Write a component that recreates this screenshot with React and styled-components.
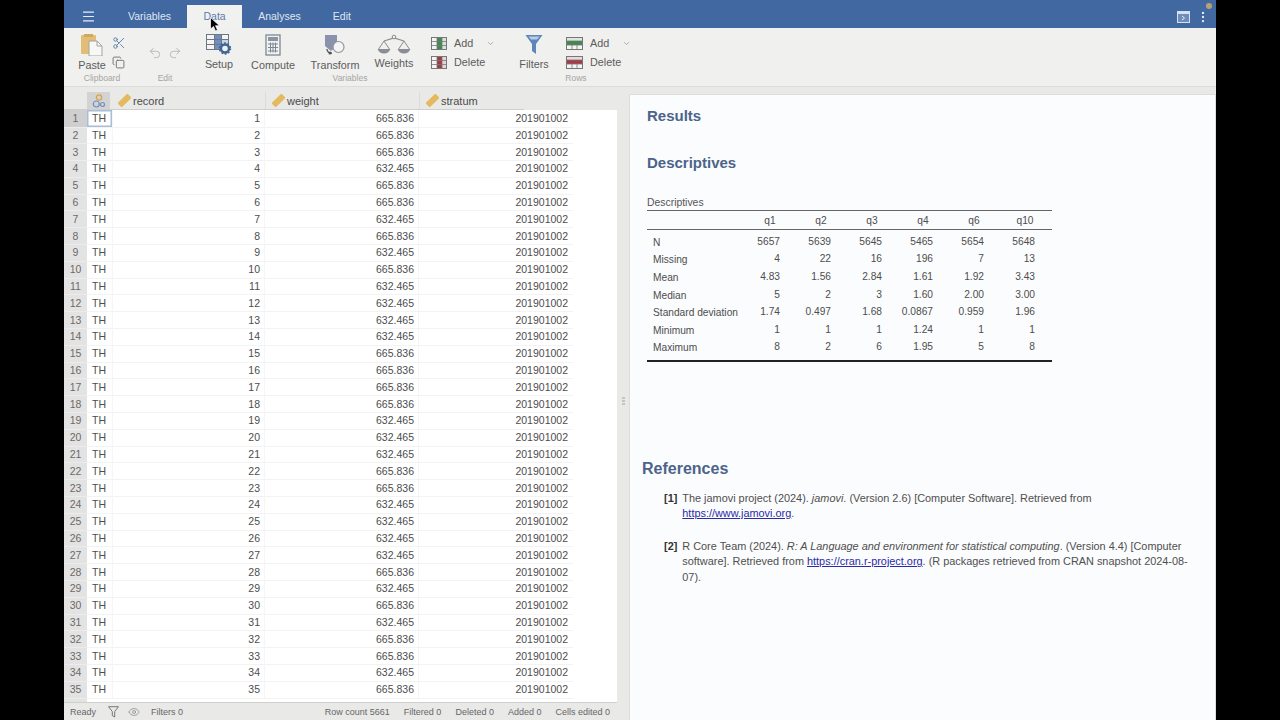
import React from 'react'
import styled, { createGlobalStyle } from 'styled-components'
import { Menu, Scissors, Copy, Undo2, Redo2, ChevronDown, EllipsisVertical, Eye } from 'lucide-react'

const GlobalStyle = createGlobalStyle`
  html, body {
    margin: 0;
    height: 100%;
    background: #000;
    font-family: "Liberation Sans", Arial, sans-serif;
    overflow: hidden;
  }
  #root { height: 100%; }
  * { box-sizing: border-box; }
`

const Page = styled.div`
  display: flex;
  justify-content: center;
  height: 720px;
`

const Window = styled.div`
  position: relative;
  width: 1152px;
  height: 720px;
  display: flex;
  flex-direction: column;
  background: #e9e9e8;
`

const TopBar = styled.div`
  height: 28px;
  flex: none;
  display: flex;
  align-items: flex-end;
  background: #4268a2;
  color: #e6edf7;
`

const MenuButton = styled.div`
  width: 48px;
  height: 23px;
  display: flex;
  align-items: center;
  justify-content: center;
  color: #e6edf7;
`

const Tab = styled.div`
  height: 23px;
  padding: 0 ${p => (p.$active ? '16.5px' : '16px')};
  font-size: 10.5px;
  line-height: 23px;
  background: ${p => (p.$active ? '#f1f1ef' : 'transparent')};
  color: ${p => (p.$active ? '#5b7cab' : '#dfe7f3')};
`

const TopRight = styled.div`
  margin-left: auto;
  height: 28px;
  display: flex;
  align-items: center;
  gap: 6px;
  padding: 6px 6px 0 0;
`

const RecordDot = styled.div`
  position: absolute;
  left: 1142px;
  top: 3px;
  width: 6px;
  height: 6px;
  border-radius: 50%;
  background: #b9a078;
`

const Cursor = styled.svg`
  position: absolute;
  left: 146px;
  top: 17px;
  width: 10px;
  height: 15px;
`

const Ribbon = styled.div`
  height: 59px;
  flex: none;
  display: flex;
  padding-left: 8px;
  background: #f0f0ee;
  border-bottom: 1px solid #dcdcdb;
`

const Group = styled.div`
  display: flex;
  flex-direction: column;
  margin-right: ${p => p.$gap || 0}px;
`

const GroupItems = styled.div`
  display: flex;
  height: 38px;
  margin-top: 6px;
  padding: ${p => p.$padding || 0};
  align-items: ${p => p.$align || 'stretch'};
  gap: ${p => p.$spacing || 0}px;
`

const GroupLabel = styled.div`
  height: 12px;
  font-size: 8.5px;
  line-height: 12px;
  text-align: center;
  color: #a5a5a3;
`

const BigButton = styled.div`
  width: ${p => p.$width}px;
  display: flex;
  flex-direction: column;
  align-items: center;
  color: #5c5c5c;
  font-size: 10.8px;
  line-height: 18px;
  white-space: nowrap;
`

const BigIcon = styled.div`
  height: 22px;
  display: flex;
  align-items: center;
  justify-content: center;
`

const SmallColumn = styled.div`
  width: ${p => p.$width}px;
  padding-left: ${p => p.$padding || 0}px;
  display: flex;
  flex-direction: column;
  gap: 1px;
`

const SmallRow = styled.div`
  height: 18px;
  display: flex;
  align-items: center;
  color: #5c5c5c;
`

const SmallText = styled.span`
  width: 32px;
  margin-left: 7px;
  font-size: 10.8px;
  white-space: nowrap;
`

const Main = styled.div`
  flex: 1;
  min-height: 0;
  display: flex;
`

const DataSide = styled.div`
  width: 553px;
  flex: none;
  display: flex;
  flex-direction: column;
  padding-top: 5px;
`

const SheetHeader = styled.div`
  height: 18px;
  flex: none;
  display: grid;
  grid-template-columns: 23px 23px 155px 154px 105px;
  border-bottom: 1px solid #cfcfcf;
  width: 460px;
`

const HeaderCell = styled.div`
  display: flex;
  align-items: center;
  gap: 2px;
  padding-left: ${p => p.$pad || 0}px;
  justify-content: ${p => (p.$type ? 'center' : 'flex-start')};
  background: ${p => (p.$type ? '#d3d3d3' : 'transparent')};
  border-left: ${p => (p.$line ? '1px solid #dcdcdc' : 'none')};
  font-size: 11px;
  color: #4a4a4a;
`

const SheetBody = styled.div`
  flex: 1;
  min-height: 0;
  overflow: hidden;
  background: linear-gradient(to right, #e3e3e3 23px, #fff 23px);
  border-bottom: 1px solid #cfcfcf;
`

const Row = styled.div`
  height: 16.8px;
  width: 509px;
  display: grid;
  grid-template-columns: 23px 26px 152px 154px 154px;
  font-size: 10.5px;
  line-height: 16.5px;
  color: #4d4d4d;
`

const RowNumber = styled.div`
  text-align: center;
  color: #6a6a6a;
  background: ${p => (p.$active ? '#cfcfcf' : 'transparent')};
  border-bottom: 1px solid #ececec;
`

const Cell = styled.div`
  padding: 0 ${p => (p.$noLine ? 5 : 4)}px 0 5px;
  text-align: ${p => (p.$left ? 'left' : 'right')};
  border-bottom: 1px solid #f3f3f3;
  border-right: ${p => (p.$noLine ? 'none' : '1px solid #f5f5f5')};
  box-shadow: ${p => (p.$selected ? 'inset 0 0 0 1.5px #a9bdd8' : 'none')};
`

const StatusBar = styled.div`
  height: 17px;
  flex: none;
  display: flex;
  align-items: center;
  padding-left: 6px;
  font-size: 9px;
  color: #666;
`

const StatusTools = styled.div`
  display: flex;
  align-items: center;
  gap: 9px;
  margin: 0 11px 0 12px;
  color: #7d7d7d;
`

const StatusCounts = styled.div`
  margin-left: auto;
  display: flex;
  gap: 14px;
  padding-right: 7px;
`

const Splitter = styled.div`
  width: 12px;
  flex: none;
  display: flex;
  flex-direction: column;
  align-items: center;
  justify-content: center;
  gap: 1px;
  padding-bottom: 6px;
`

const Grip = styled.span`
  width: 3px;
  height: 2px;
  background: #c4c4c4;
`

const ResultsPanel = styled.div`
  flex: 1;
  min-width: 0;
  margin-top: 7px;
  padding: 12px 20px 0 17px;
  background: #fbfcfd;
  border-top: 1px solid #dcdcdc;
  border-left: 1px solid #dcdcdc;
  border-right: 1px solid #dfdfdf;
  color: #4a4a4a;
`

const Heading = styled.h2`
  margin: ${p => p.$top || 0}px 0 0 ${p => p.$left || 0}px;
  font-size: ${p => p.$size || 15}px;
  line-height: 18px;
  font-weight: 700;
  color: #4c6489;
`

const Caption = styled.div`
  margin-top: 24px;
  font-size: 10.4px;
  line-height: 14px;
  color: #555;
`

const Table = styled.table`
  width: 405px;
  margin-top: 0;
  border-collapse: collapse;
  table-layout: fixed;
  font-size: 10.2px;
  color: #4d4d4d;
  border-top: 1px solid #666;
  border-bottom: 2px solid #222;

  thead tr { border-bottom: 1px solid #666; }
`

const LabelCol = styled.col`
  width: 82px;
`

const ValueCol = styled.col`
  width: 51px;
`

const EndCol = styled.col`
  width: 17px;
`

const HeadCell = styled.th`
  height: 19px;
  padding: 0 0 0 31px;
  text-align: center;
  font-weight: 400;
`

const LabelCell = styled.td`
  height: 17.6px;
  padding: 2px 0 0 6px;
  white-space: nowrap;
  overflow: visible;
`

const ValueCell = styled.td`
  height: 17.6px;
  padding: 0;
  text-align: right;
  white-space: nowrap;
`

const PadRow = styled.tr`
  height: ${p => p.$height}px;
`

const References = styled.div`
  margin: 13px 0 0 17px;
  font-size: 10.9px;
  line-height: 15.5px;
  color: #4f4f4f;
`

const Reference = styled.div`
  display: flex;
  gap: 5px;
  margin-top: ${p => p.$top || 0}px;
`

const RefNumber = styled.b`
  flex: none;
  color: #333;
`

const RefLink = styled.a`
  color: #2a2aa8;
  text-decoration: underline;
`

const icon = { strokeWidth: 1.6 }

const PasteIcon = () => (
  <svg width="24" height="22" viewBox="0 0 24 22">
    <rect x="1" y="1" width="15" height="19" rx="1" fill="#e3bd76" />
    <rect x="4" y="0" width="9" height="3" fill="#d1a85f" />
    <path d="M9 7h8l5 5v10H9z" fill="#f7f7f5" stroke="#a3a3a3" />
    <path d="M17 7v5h5" fill="none" stroke="#a3a3a3" />
  </svg>
)

const SetupIcon = () => (
  <svg width="26" height="21" viewBox="0 0 26 21">
    <rect x="0.5" y="0.5" width="8" height="5" fill="#f4f4f4" stroke="#6d7685" />
    <rect x="8.5" y="0.5" width="7" height="5" fill="#6f8fbc" stroke="#6d7685" />
    <rect x="15.5" y="0.5" width="7" height="5" fill="#f4f4f4" stroke="#6d7685" />
    <rect x="0.5" y="5.5" width="8" height="5" fill="#f4f4f4" stroke="#6d7685" />
    <rect x="8.5" y="5.5" width="7" height="5" fill="#6f8fbc" stroke="#6d7685" />
    <rect x="15.5" y="5.5" width="7" height="5" fill="#c9d5e6" stroke="#6d7685" />
    <rect x="0.5" y="10.5" width="8" height="5" fill="#f4f4f4" stroke="#6d7685" />
    <rect x="8.5" y="10.5" width="7" height="5" fill="#6f8fbc" stroke="#6d7685" />
    <circle cx="19" cy="14.5" r="4" fill="none" stroke="#3f6496" strokeWidth="2.4" />
    <circle cx="19" cy="14.5" r="5.4" fill="none" stroke="#3f6496" strokeWidth="1.6" strokeDasharray="1.7 1.7" />
  </svg>
)

const ComputeIcon = () => (
  <svg width="16" height="22" viewBox="0 0 16 22">
    <rect x="1" y="1" width="14" height="20" fill="#f2f2f2" stroke="#7d8794" strokeWidth="1.3" />
    <rect x="3" y="3" width="10" height="4" fill="#8b94a1" />
    <path d="M3 10h10M3 13.5h10M3 17h10M5.5 8.5v10M8 8.5v10M10.5 8.5v10" stroke="#7d8794" />
  </svg>
)

const TransformIcon = () => (
  <svg width="22" height="22" viewBox="0 0 22 22">
    <path d="M1 1h12v11l-6 5-6-5z" fill="#8a93ab" />
    <circle cx="14.5" cy="13" r="5.5" fill="#f4f4f4" stroke="#8f959e" strokeWidth="1.2" />
    <path d="M3 15a4 4 0 0 0 5 4" fill="none" stroke="#555" strokeWidth="1.3" />
    <circle cx="6" cy="19" r="1.5" fill="#555" />
  </svg>
)

const WeightsIcon = () => (
  <svg width="34" height="20" viewBox="0 0 34 20">
    <path d="M7 7l10-3 10 3" fill="none" stroke="#8b8b8b" strokeWidth="1.2" />
    <circle cx="17" cy="3" r="1.8" fill="#f0f0ee" stroke="#8b8b8b" />
    <path d="M7 7L1 16M7 7l6 9M27 7l-6 9M27 7l6 9" fill="none" stroke="#8b8b8b" />
    <path d="M1 15h12a6 4.5 0 0 1-12 0zM21 15h12a6 4.5 0 0 1-12 0z" fill="#8c8c97" />
  </svg>
)

const ColumnsIcon = ({ color, light }) => (
  <svg width="16" height="13" viewBox="0 0 16 13">
    <rect x="0.5" y="0.5" width="15" height="12" fill="#f4f4f4" stroke="#777" />
    <rect x="6" y="1" width="5" height="11" fill={color} />
    <rect x="11" y="1" width="4" height="11" fill={light} />
    <path d="M1 4.5h14M1 8.5h14M6 1v11M11 1v11" stroke="#777" strokeWidth="0.8" />
  </svg>
)

const RowsIcon = ({ color, light }) => (
  <svg width="17" height="13" viewBox="0 0 17 13">
    <rect x="0.5" y="0.5" width="16" height="12" fill="#f4f4f4" stroke="#777" />
    <rect x="1" y="4" width="15" height="4" fill={color} />
    <rect x="1" y="1" width="15" height="3" fill={light} />
    <path d="M1 4h15M1 8h15M6 8v4M11 8v4" stroke="#777" strokeWidth="0.8" />
  </svg>
)

const FunnelIcon = () => (
  <svg width="18" height="21" viewBox="0 0 18 21">
    <path d="M0.5 1h17L11 10v10l-4-3v-7z" fill="#5f86bb" />
    <path d="M3.5 2.5h11L12 5.5H6z" fill="#b9cde6" />
  </svg>
)

const SmallFunnel = () => (
  <svg width="11" height="12" viewBox="0 0 11 12">
    <path d="M0.5 0.7h10L6.7 5.5V11L4.3 9.6V5.5z" fill="none" stroke="#777" />
  </svg>
)

const ResultsToggle = () => (
  <svg width="13" height="12" viewBox="0 0 13 12">
    <rect x="0.5" y="0.5" width="12" height="11" fill="#6f8dbb" stroke="#d5e0f0" />
    <rect x="1" y="1" width="11" height="2" fill="#d5e0f0" />
    <path d="M5 5l2.5 2L5 9" fill="none" stroke="#e6edf7" />
  </svg>
)

const TagIcon = () => (
  <svg width="13" height="13" viewBox="0 0 13 13">
    <rect x="3.5" y="-0.5" width="6" height="14" rx="1" fill="#e4b95f" transform="rotate(45 6.5 6.5)" />
  </svg>
)

const IdIcon = () => (
  <svg width="14" height="14" viewBox="0 0 14 14">
    <circle cx="7" cy="3.5" r="2.6" fill="none" stroke="#d9a441" strokeWidth="1.3" />
    <circle cx="4.3" cy="10" r="3" fill="none" stroke="#6f8fc4" strokeWidth="1.2" />
    <circle cx="10.5" cy="10.5" r="2" fill="none" stroke="#6f8fc4" strokeWidth="1.2" />
  </svg>
)

const weights = 'AAABAABABABBBBAAAABBBAABBBBABABAABA'

const descriptives = [
  ['N', '5657', '5639', '5645', '5465', '5654', '5648'],
  ['Missing', '4', '22', '16', '196', '7', '13'],
  ['Mean', '4.83', '1.56', '2.84', '1.61', '1.92', '3.43'],
  ['Median', '5', '2', '3', '1.60', '2.00', '3.00'],
  ['Standard deviation', '1.74', '0.497', '1.68', '0.0867', '0.959', '1.96'],
  ['Minimum', '1', '1', '1', '1.24', '1', '1'],
  ['Maximum', '8', '2', '6', '1.95', '5', '8'],
]

const questions = ['q1', 'q2', 'q3', 'q4', 'q6', 'q10']

const App = () => (
  <Page>
    <GlobalStyle />
    <Window>
      <TopBar>
        <MenuButton><Menu size={15} strokeWidth={1.8} /></MenuButton>
        <Tab>Variables</Tab>
        <Tab $active>Data</Tab>
        <Tab>Analyses</Tab>
        <Tab>Edit</Tab>
        <TopRight>
          <ResultsToggle />
          <EllipsisVertical size={14} />
        </TopRight>
      </TopBar>

      <Ribbon>
        <Group $gap={10}>
          <GroupItems $padding="0 6px 0 0">
            <BigButton $width={40}>
              <BigIcon><PasteIcon /></BigIcon>
              Paste
            </BigButton>
            <SmallColumn $width={14}>
              <SmallRow><Scissors size={14} color="#5f7ea8" {...icon} /></SmallRow>
              <SmallRow><Copy size={13} color="#666" {...icon} /></SmallRow>
            </SmallColumn>
          </GroupItems>
          <GroupLabel>Clipboard</GroupLabel>
        </Group>

        <Group $gap={8}>
          <GroupItems $padding="0 6px" $align="center" $spacing={6}>
            <Undo2 size={14} color="#b5b5b5" {...icon} />
            <Redo2 size={14} color="#b5b5b5" {...icon} />
          </GroupItems>
          <GroupLabel>Edit</GroupLabel>
        </Group>

        <Group $gap={8}>
          <GroupItems>
            <BigButton $width={46}><BigIcon><SetupIcon /></BigIcon>Setup</BigButton>
            <BigButton $width={62}><BigIcon><ComputeIcon /></BigIcon>Compute</BigButton>
            <BigButton $width={62}><BigIcon><TransformIcon /></BigIcon>Transform</BigButton>
            <BigButton $width={56}><BigIcon><WeightsIcon /></BigIcon>Weights</BigButton>
            <SmallColumn $width={82} $padding={9}>
              <SmallRow>
                <ColumnsIcon color="#3f8a4e" light="#d5e6d8" />
                <SmallText>Add</SmallText>
                <ChevronDown size={9} color="#999" />
              </SmallRow>
              <SmallRow>
                <ColumnsIcon color="#9c3c48" light="#e8d3d6" />
                <SmallText>Delete</SmallText>
              </SmallRow>
            </SmallColumn>
          </GroupItems>
          <GroupLabel>Variables</GroupLabel>
        </Group>

        <Group>
          <GroupItems $padding="0 8px 0 0">
            <BigButton $width={44}><BigIcon><FunnelIcon /></BigIcon>Filters</BigButton>
            <SmallColumn $width={76} $padding={10}>
              <SmallRow>
                <RowsIcon color="#3f8a4e" light="#dfe6df" />
                <SmallText>Add</SmallText>
                <ChevronDown size={9} color="#999" />
              </SmallRow>
              <SmallRow>
                <RowsIcon color="#a83a48" light="#e8dadc" />
                <SmallText>Delete</SmallText>
              </SmallRow>
            </SmallColumn>
          </GroupItems>
          <GroupLabel>Rows</GroupLabel>
        </Group>
      </Ribbon>

      <Main>
        <DataSide>
          <SheetHeader>
            <span />
            <HeaderCell $type><IdIcon /></HeaderCell>
            <HeaderCell $pad={8}><TagIcon />record</HeaderCell>
            <HeaderCell $line $pad={6}><TagIcon />weight</HeaderCell>
            <HeaderCell $line $pad={6}><TagIcon />stratum</HeaderCell>
          </SheetHeader>
          <SheetBody>
            {[...weights].map((w, i) => (
              <Row key={i}>
                <RowNumber $active={i === 0}>{i + 1}</RowNumber>
                <Cell $left $selected={i === 0}>TH</Cell>
                <Cell>{i + 1}</Cell>
                <Cell>{w === 'A' ? '665.836' : '632.465'}</Cell>
                <Cell $noLine>201901002</Cell>
              </Row>
            ))}
          </SheetBody>
          <StatusBar>
            Ready
            <StatusTools>
              <SmallFunnel />
              <Eye size={12} strokeWidth={1.3} />
            </StatusTools>
            Filters 0
            <StatusCounts>
              <span>Row count 5661</span>
              <span>Filtered 0</span>
              <span>Deleted 0</span>
              <span>Added 0</span>
              <span>Cells edited 0</span>
            </StatusCounts>
          </StatusBar>
        </DataSide>

        <Splitter>
          <Grip /><Grip /><Grip />
        </Splitter>

        <ResultsPanel>
          <Heading>Results</Heading>
          <Heading $top={29}>Descriptives</Heading>
          <Caption>Descriptives</Caption>
          <Table>
            <colgroup>
              <LabelCol />
              {questions.map(q => <ValueCol key={q} />)}
              <EndCol />
            </colgroup>
            <thead>
              <tr>
                <th />
                {questions.map(q => <HeadCell key={q}>{q}</HeadCell>)}
                <th />
              </tr>
            </thead>
            <tbody>
              <PadRow $height={3} />
              {descriptives.map(([label, ...values]) => (
                <tr key={label}>
                  <LabelCell>{label}</LabelCell>
                  {values.map((v, i) => <ValueCell key={i}>{v}</ValueCell>)}
                  <td />
                </tr>
              ))}
              <PadRow $height={5} />
            </tbody>
          </Table>

          <Heading $top={98} $left={-5} $size={16}>References</Heading>
          <References>
            <Reference>
              <RefNumber>[1]</RefNumber>
              <div>
                The jamovi project (2024). <i>jamovi</i>. (Version 2.6) [Computer Software]. Retrieved from{' '}
                <RefLink href="#">https://www.jamovi.org</RefLink>.
              </div>
            </Reference>
            <Reference $top={17}>
              <RefNumber>[2]</RefNumber>
              <div>
                R Core Team (2024). <i>R: A Language and environment for statistical computing</i>. (Version 4.4) [Computer software]. Retrieved from{' '}
                <RefLink href="#">https://cran.r-project.org</RefLink>. (R packages retrieved from CRAN snapshot 2024-08-<wbr />07).
              </div>
            </Reference>
          </References>
        </ResultsPanel>
      </Main>

      <Cursor viewBox="0 0 10 15">
        <path d="M0.5 0.5v11.5l3-2.6 2 4.6 2-0.9-2-4.4h4z" fill="#000" stroke="#fff" strokeWidth="0.7" />
      </Cursor>
      <RecordDot />
    </Window>
  </Page>
)

export default App
